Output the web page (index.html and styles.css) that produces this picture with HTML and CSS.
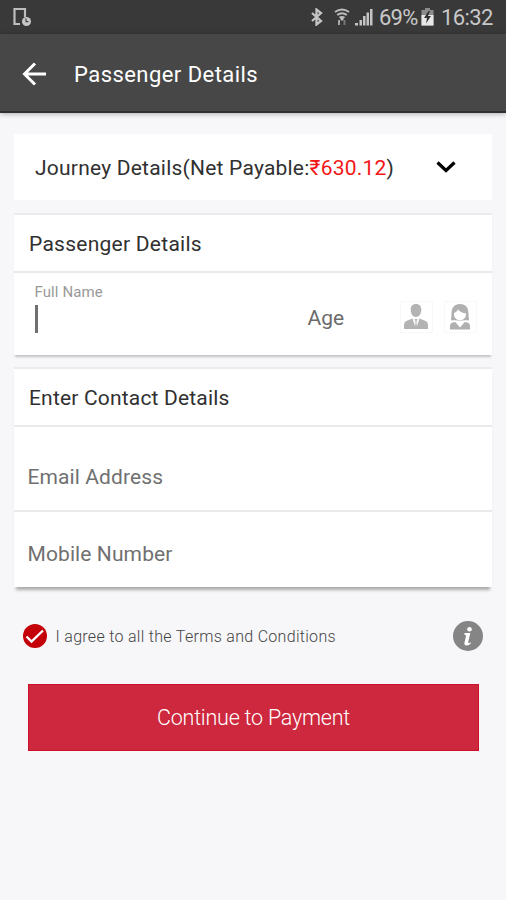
FILE: index.html
```html
<!DOCTYPE html>
<html lang="en">
<head>
<meta charset="utf-8">
<title>Passenger Details</title>
<link rel="stylesheet" href="styles.css">
</head>
<body>
<div class="status">
  <svg class="device" width="20" height="20" viewBox="0 0 20 20" fill="none" stroke="#bdbdbd" stroke-width="2.200"><path d="M8 17H2.500V2H13v8"/><circle cx="14.500" cy="14.500" r="4.500" fill="#c8c8c8" stroke="none"/><path d="M14 11.500v3.200h2.500" stroke="#444" stroke-width="1.200"/></svg>
  <svg class="bt" width="14" height="18" viewBox="0 0 14 18" fill="none" stroke="#c4c4c4" stroke-width="2.300"><path d="M2 5l9 8-4.500 3.500V1.500L11 5l-9 8"/></svg>
  <svg class="wifi" width="16" height="18" viewBox="0 0 16 18" fill="none" stroke="#bdbdbd" stroke-width="2"><path d="M1 4q7-5 14 0M3.200 7q4.800-3.500 9.600 0M5.500 9.800q2.500-1.800 5 0"/><path d="M8 9l2 2-2 2-2-2z" fill="#bdbdbd" stroke="none"/><path d="M5 12v5" stroke="#aaa"/><path d="M10.500 12v5" stroke="#777"/></svg>
  <svg class="signal" width="18" height="18" viewBox="0 0 18 18" fill="#c4c4c4"><path d="M0 15h3v2.500H0zM4.500 12h2.500v5.500H4.500zM8 8h2.500v9.500H8zM11.500 4.500H14v13h-2.500zM15 1h2.500v16.500H15z"/></svg>
  <span class="pct">69%</span>
  <svg class="battery" width="13" height="18" viewBox="0 0 13 18"><path d="M4 0h5v2h3.500v15.500H.5V2H4z" fill="#8c8c8c"/><path d="M.5 7h12v10.500H.5z" fill="#e8e8e8"/><path d="M7.500 3L3 10h3l-1 5.500L10 8H7l2-5z" fill="#333"/></svg>
  <span class="clock">16:32</span>
</div>
<header class="appbar">
  <svg class="back" width="26" height="24" viewBox="0 0 26 24" fill="none" stroke="#fff" stroke-width="3"><path d="M24 12H3M13 1.500L2.500 12 13 22.500"/></svg>
  <h1>Passenger Details</h1>
</header>
<main>
  <section class="journey">
    <span class="journey-text">Journey Details(Net Payable:<b>₹630.12</b>)</span>
    <svg class="chevron" width="20" height="14" viewBox="0 0 20 14" fill="none" stroke="#000" stroke-width="3.200"><path d="M1.500 2.500L10 10.500l8.500-8"/></svg>
  </section>
  <section class="card passenger">
    <h2>Passenger Details</h2>
    <div class="fields">
      <div class="name"><label>Full Name</label><i class="caret"></i></div>
      <span class="age">Age</span>
      <span class="gender male"><svg width="24" height="26" viewBox="0 0 24 26" fill="#b3b3b3"><path d="M12 0c3.600 0 5.300 2.300 5.300 5.500 0 4-2 7.500-5.300 7.500S6.700 9.500 6.700 5.500C6.700 2.300 8.400 0 12 0zM8.500 14.500l2.700 8 .3-5-1-2.500h3l-1 2.500.3 5 2.700-8 6.200 2.500q2.300 1 2.300 4V25H0v-4q0-3 2.300-4z"/></svg></span>
      <span class="gender"><svg width="20" height="26" viewBox="0 0 20 26"><path d="M10 0c6 0 8.500 4 8.500 9.500 0 3 .5 5 .5 7H1c0-2 .5-4 .5-7C1.500 4 4 0 10 0z" fill="#b0b0b0"/><path d="M4 10.500V9q2.500-.5 4-3.500 3 3.500 8 4v1c0 3.500-2.500 5.500-6 5.500s-6-2-6-5.500z" fill="#fff"/><path d="M1.500 16.500h4.700L10 19l3.800-2.500h4.700v1L14 18.500 10 23l-4-4.500-4.500-1z" fill="#fff"/><path d="M0 25.500v-3.500q0-3 3.500-3.800h2L10 23.500l4.500-5.300h2q3.500.8 3.500 3.800v3.500z" fill="#b0b0b0"/></svg></span>
    </div>
  </section>
  <section class="card contact">
    <h2>Enter Contact Details</h2>
    <div class="row email">Email Address</div>
    <div class="row mobile">Mobile Number</div>
  </section>
  <div class="agree">
    <svg width="24" height="24" viewBox="0 0 24 24"><circle cx="12" cy="12" r="12" fill="#c40008"/><path d="M3.500 12.500l5 5L20 6.500" fill="none" stroke="#fff" stroke-width="2.400"/></svg>
    <span class="terms">I agree to all the Terms and Conditions</span>
    <svg class="info" width="30" height="30" viewBox="0 0 30 30"><circle cx="15" cy="15" r="15" fill="#858585"/><circle cx="16.500" cy="8.300" r="2.300" fill="#fff"/><path d="M11.200 13.500l.4-1.500h5.700l-2 8.800q-.3 1.400.6 1.400.8 0 1.800-.9l.4.700q-2 2.500-4.500 2.500-2.800 0-2.100-3l1.500-6.500q.3-1.400-1.800-1.500z" fill="#fff"/></svg>
  </div>
  <button class="pay">Continue to Payment</button>
</main>
</body>
</html>
```
FILE: styles.css
```css
* { box-sizing: border-box; }
body {
  margin: 0;
  height: 900px;
  background: #f7f7f9;
  font-family: Roboto, "Liberation Sans", sans-serif;
  font-size: 21px;
  color: #303030;
  overflow: hidden;
}
svg { display: block; flex: none; }
span, h1, h2 { white-space: nowrap; }
.status {
  display: flex;
  align-items: center;
  height: 34px;
  padding: 0 13px 0 12px;
  background: #393939;
  color: #c8c8c8;
  font-size: 22px;
}
.bt { margin-left: auto; margin-right: 10px; }
.wifi { margin-right: 5px; }
.signal { margin-right: 6px; }
.pct { width: 42px; letter-spacing: -0.8px; }
.battery { margin-right: 7px; }
.clock { width: 52px; letter-spacing: -0.6px; }
.appbar {
  display: flex;
  align-items: center;
  height: 79px;
  padding: 2px 0 0 22px;
  background: #474747;
  border-bottom: 2px solid #303030;
  box-shadow: 0 1px 5px rgba(0, 0, 0, 0.3);
}
h1 {
  margin: 2px 0 0 26px;
  font-size: 22px;
  font-weight: 400;
  letter-spacing: 0.45px;
  color: #fff;
}
main { padding: 21px 14px 0; }
.journey {
  display: flex;
  align-items: center;
  justify-content: space-between;
  height: 66px;
  padding: 1px 36.500px 0 21px;
  background: #fff;
}
.chevron { margin-bottom: 2px; }
.journey-text { letter-spacing: 0.22px; }
.journey b { font-weight: 400; color: #f41616; }
.card {
  background: #fff;
  border-top: 2px solid #ebebed;
}
.passenger { margin-top: 13px; box-shadow: 0 3px 2px -1px #c4c4c6; }
.contact { margin-top: 12px; box-shadow: 0 5px 3px -2px #aaaaac; }
h2 {
  margin: 0;
  height: 58px;
  padding-left: 15px;
  border-bottom: 2px solid #e9e9eb;
  font-size: 21px;
  font-weight: 400;
  line-height: 58px;
  letter-spacing: 0.26px;
}
.contact h2 { line-height: 59px; letter-spacing: 0.18px; }
.fields {
  display: flex;
  height: 82px;
  padding: 10px 14.500px 0 20.500px;
  color: #6b6b6b;
}
.name { width: 273px; }
label {
  display: block;
  font-size: 15px;
  line-height: 19px;
  letter-spacing: 0.1px;
  color: #999;
}
.caret {
  display: block;
  width: 3px;
  height: 28px;
  margin-top: 3px;
  background: #707070;
}
.age { width: 92px; padding-top: 23px; line-height: 25px; }
.gender {
  display: flex;
  align-items: center;
  justify-content: center;
  width: 33px;
  height: 32px;
  margin-top: 18px;
  border: 1px solid #f8f8f8;
}
.male { margin-right: 11px; }
.gender svg { margin: 0 1px 1px 0; }
.row { padding-left: 13.500px; color: #707070; letter-spacing: 0.1px; }
.email { height: 85px; line-height: 101px; border-bottom: 2px solid #e9e9eb; }
.mobile { height: 75px; line-height: 84px; }
.agree {
  display: flex;
  align-items: center;
  height: 30px;
  margin: 34px 9px 0;
}
.terms {
  margin-left: 8.500px;
  padding-top: 1px;
  font-size: 16px;
  font-weight: 300;
  letter-spacing: 0.3px;
  color: #444;
}
.info { margin-left: auto; }
.pay {
  display: block;
  width: 451px;
  height: 67px;
  margin: 33px 0 0 14px;
  padding: 0;
  border: 1px solid #cb1027;
  background: #ce283e;
  color: #fff;
  font: 300 21.500px Roboto, "Liberation Sans", sans-serif;
  letter-spacing: -0.22px;
}
```
